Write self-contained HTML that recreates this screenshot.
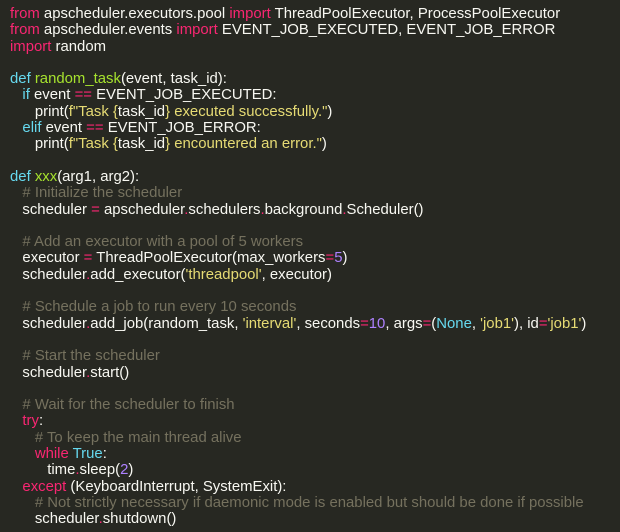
<!DOCTYPE html>
<html><head><meta charset="utf-8"><style>
html,body{margin:0;padding:0;background:#272822;width:620px;height:532px;overflow:hidden}
pre{margin:0;padding:6px 0 0 10px;font-family:"Liberation Sans",sans-serif;font-size:14.9px;line-height:16.3px;color:#f8f8f2;white-space:pre}
.k{color:#f92672}.d{color:#66d9ef}.f{color:#a6e22e}.s{color:#e6db74}.c{color:#75715e}.n{color:#ae81ff}
</style></head><body><pre><span class="k">from</span> apscheduler.executors.pool <span class="k">import</span> ThreadPoolExecutor, ProcessPoolExecutor
<span class="k">from</span> apscheduler.events <span class="k">import</span> EVENT_JOB_EXECUTED, EVENT_JOB_ERROR
<span class="k">import</span> random

<span class="d">def</span> <span class="f">random_task</span>(event, task_id):
   <span class="d">if</span> event <span class="k">==</span> EVENT_JOB_EXECUTED:
      print(<span class="s">f"Task {</span>task_id<span class="s">} executed successfully."</span>)
   <span class="d">elif</span> event <span class="k">==</span> EVENT_JOB_ERROR:
      print(<span class="s">f"Task {</span>task_id<span class="s">} encountered an error."</span>)

<span class="d">def</span> <span class="f">xxx</span>(arg1, arg2):
   <span class="c"># Initialize the scheduler</span>
   scheduler <span class="k">=</span> apscheduler<span class="k">.</span>schedulers<span class="k">.</span>background<span class="k">.</span>Scheduler()

   <span class="c"># Add an executor with a pool of 5 workers</span>
   executor <span class="k">=</span> ThreadPoolExecutor(max_workers<span class="k">=</span><span class="n">5</span>)
   scheduler<span class="k">.</span>add_executor(<span class="s">'threadpool'</span>, executor)

   <span class="c"># Schedule a job to run every 10 seconds</span>
   scheduler<span class="k">.</span>add_job(random_task, <span class="s">'interval'</span>, seconds<span class="k">=</span><span class="n">10</span>, args<span class="k">=</span>(<span class="d">None</span>, <span class="s">'job1'</span>), id<span class="k">=</span><span class="s">'job1'</span>)

   <span class="c"># Start the scheduler</span>
   scheduler<span class="k">.</span>start()

   <span class="c"># Wait for the scheduler to finish</span>
   <span class="k">try</span>:
      <span class="c"># To keep the main thread alive</span>
      <span class="k">while</span> <span class="d">True</span>:
         time<span class="k">.</span>sleep(<span class="n">2</span>)
   <span class="k">except</span> (KeyboardInterrupt, SystemExit):
      <span class="c"># Not strictly necessary if daemonic mode is enabled but should be done if possible</span>
      scheduler<span class="k">.</span>shutdown()</pre></body></html>
